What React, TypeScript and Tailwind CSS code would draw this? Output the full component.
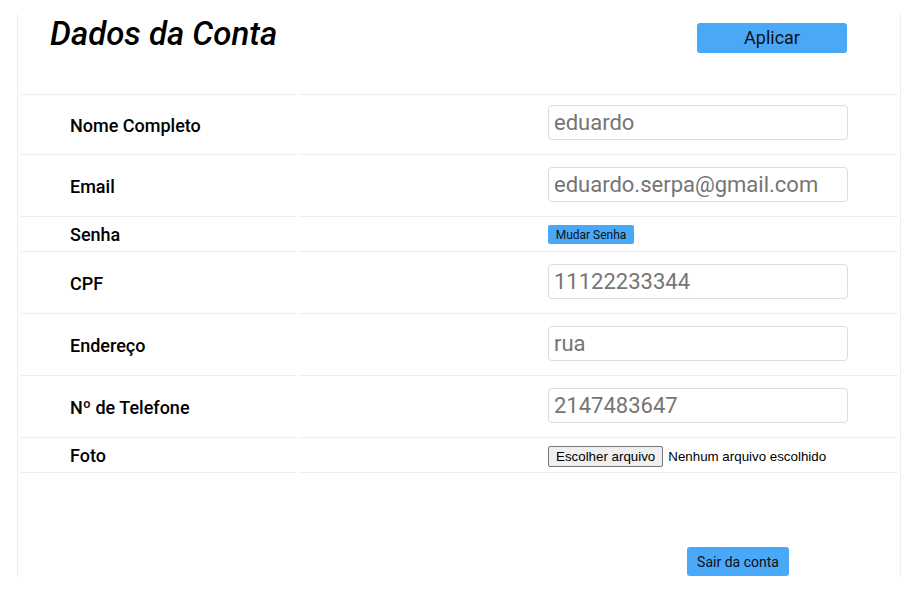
import React from "react";

const roboto = { fontFamily: "Roboto, 'Liberation Sans', sans-serif" };

function InputRow({ label, value, h, top }: { label: string; value: string; h: string; top: string }) {
  return (
    <div className={`flex gap-[2px] ${h}`}>
      <div className="w-[276px] border-t border-[#eeeeee] flex items-center pl-[50px] pt-[2px] text-[18px] font-medium text-black">
        {label}
      </div>
      <div className={`w-[600px] border-t border-[#eeeeee] pl-[250px] ${top}`}>
        <div className="w-[300px] h-[35px] border border-[#dddddd] rounded-[4px] pl-[5px] flex items-center text-[22px] text-[#757575]">
          {value}
        </div>
      </div>
    </div>
  );
}

export default function App() {
  return (
    <div className="w-[924px] h-[601px] bg-white overflow-hidden pt-[14px]" style={roboto}>
      <div className="ml-[17px] w-[884px] h-[563px] border-x border-[#eeeeee] pl-[2px]">
        {/* header */}
        <div className="flex gap-[2px] h-[80px]">
          <div className="w-[276px] pl-[30px]">
            <h1 className="text-[33px] italic font-medium text-black leading-[40px] whitespace-nowrap">Dados da Conta</h1>
          </div>
          <div className="w-[600px] pl-[399px] pt-[9px] flex items-start">
            <button className="w-[150px] h-[30px] bg-[#4aa8f9] rounded-[3px] text-[18px] text-[#111] leading-none">
              Aplicar
            </button>
          </div>
        </div>
        <InputRow label="Nome Completo" value="eduardo" h="h-[60px]" top="pt-[10px]" />
        <InputRow label="Email" value="eduardo.serpa@gmail.com" h="h-[62px]" top="pt-[12px]" />
        <div className="flex gap-[2px] h-[35px]">
          <div className="w-[276px] border-t border-[#eeeeee] flex items-center pl-[50px] text-[18px] font-medium text-black">
            Senha
          </div>
          <div className="w-[600px] border-t border-[#eeeeee] pl-[250px] pt-[8px] flex items-start">
            <button className="w-[86px] h-[19px] bg-[#4aa8f9] rounded-[2px] text-[12px] text-[#111] leading-none">
              Mudar Senha
            </button>
          </div>
        </div>
        <InputRow label="CPF" value="11122233344" h="h-[62px]" top="pt-[12px]" />
        <InputRow label="Endereço" value="rua" h="h-[62px]" top="pt-[12px]" />
        <InputRow label="Nº de Telefone" value="2147483647" h="h-[62px]" top="pt-[12px]" />
        <div className="flex gap-[2px] h-[36px]">
          <div className="w-[276px] border-t border-b border-[#eeeeee] flex items-center pl-[50px] text-[18px] font-medium text-black">
            Foto
          </div>
          <div
            className="w-[600px] border-t border-b border-[#eeeeee] pl-[250px] pt-[8px] flex items-start text-[13.33px] text-black"
            style={{ fontFamily: "'Liberation Sans', Arial, sans-serif" }}
          >
            <span className="h-[21px] px-[7px] border border-[#767676] rounded-[2px] bg-[#efefef] flex items-center">
              Escolher arquivo
            </span>
            <span className="ml-[5px] h-[21px] flex items-center">Nenhum arquivo escolhido</span>
          </div>
        </div>
        <div className="pl-[667px] pt-[74px]">
          <button className="w-[102px] h-[29px] bg-[#4aa8f9] rounded-[3px] text-[14px] text-[#111] leading-none">
            Sair da conta
          </button>
        </div>
      </div>
    </div>
  );
}
